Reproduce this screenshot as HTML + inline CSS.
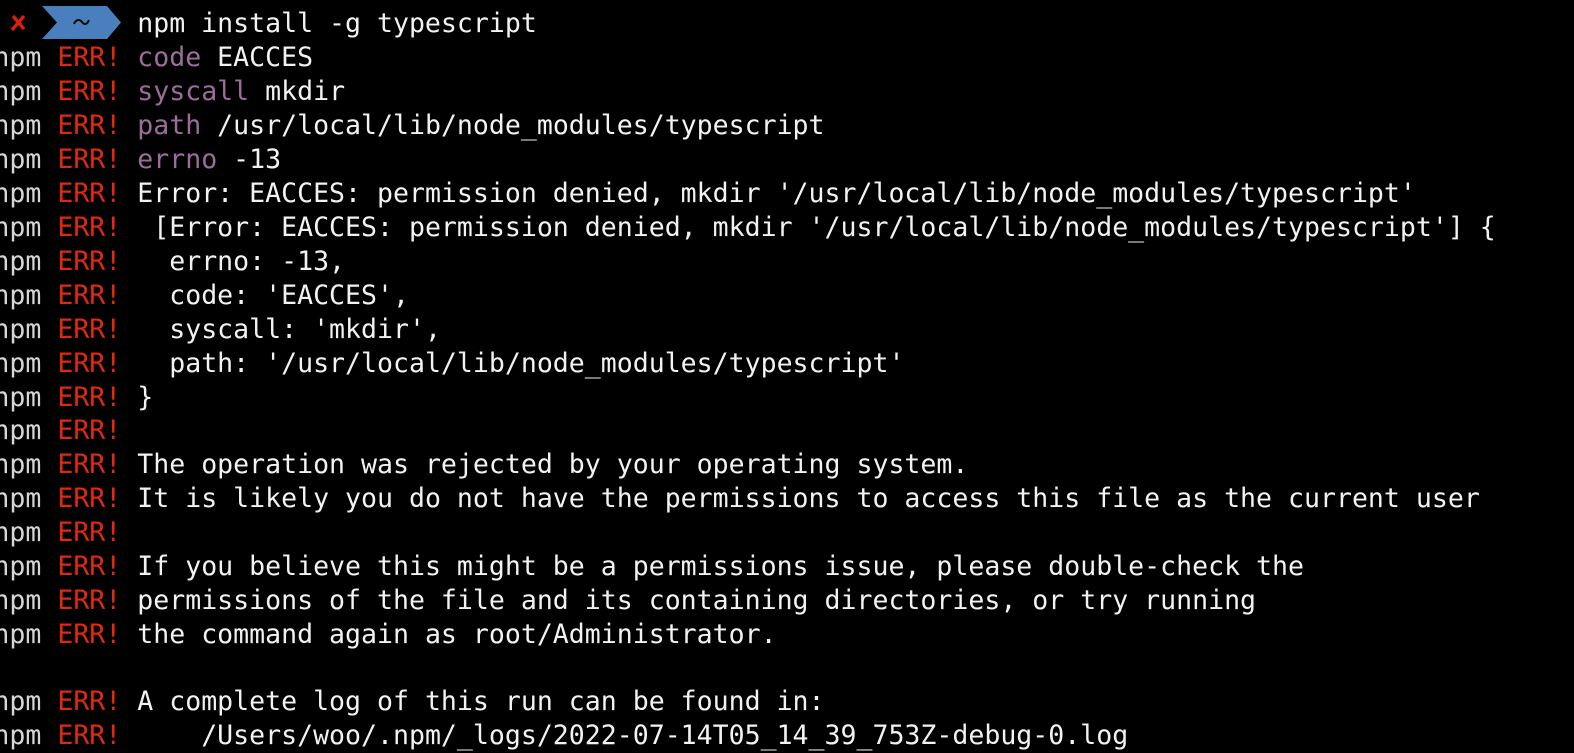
<!DOCTYPE html>
<html><head><meta charset="utf-8"><style>
html,body{margin:0;padding:0;background:#000;width:1574px;height:746px;overflow:hidden}
.l{position:absolute;left:-6.6px;font-family:"DejaVu Sans Mono","Liberation Mono",monospace;font-size:26.55px;line-height:34px;height:34px;white-space:pre;color:#f2f2f2;margin-top:2px}
.n{color:#d6d6d6}.e{color:#e0290f}.p{color:#9c6d9c}
</style></head><body>
<svg style="position:absolute;left:0;top:0" width="130" height="45">
<path d="M13 16 L24 29 M24 16 L12 30" stroke="#d8200c" stroke-width="3.4"/>
<polygon points="42,6 107,6 121,22.5 107,39 42,39 57,22.5" fill="#4a7fbd"/>
<path d="M74 24 C76 19,80 19,82 22 C84 25,87 25,89 20" stroke="#0a0a0a" stroke-width="2" fill="none"/>
</svg>
<div class="l" style="top:5px">         npm install -g typescript</div>
<div class="l" style="top:39px"><span class="n">npm</span> <span class="e">ERR!</span> <span class="p">code</span> EACCES</div>
<div class="l" style="top:73px"><span class="n">npm</span> <span class="e">ERR!</span> <span class="p">syscall</span> mkdir</div>
<div class="l" style="top:107px"><span class="n">npm</span> <span class="e">ERR!</span> <span class="p">path</span> /usr/local/lib/node_modules/typescript</div>
<div class="l" style="top:141px"><span class="n">npm</span> <span class="e">ERR!</span> <span class="p">errno</span> -13</div>
<div class="l" style="top:175px"><span class="n">npm</span> <span class="e">ERR!</span> Error: EACCES: permission denied, mkdir '/usr/local/lib/node_modules/typescript'</div>
<div class="l" style="top:209px"><span class="n">npm</span> <span class="e">ERR!</span>  [Error: EACCES: permission denied, mkdir '/usr/local/lib/node_modules/typescript'] {</div>
<div class="l" style="top:243px"><span class="n">npm</span> <span class="e">ERR!</span>   errno: -13,</div>
<div class="l" style="top:277px"><span class="n">npm</span> <span class="e">ERR!</span>   code: 'EACCES',</div>
<div class="l" style="top:311px"><span class="n">npm</span> <span class="e">ERR!</span>   syscall: 'mkdir',</div>
<div class="l" style="top:345px"><span class="n">npm</span> <span class="e">ERR!</span>   path: '/usr/local/lib/node_modules/typescript'</div>
<div class="l" style="top:379px"><span class="n">npm</span> <span class="e">ERR!</span> }</div>
<div class="l" style="top:412px"><span class="n">npm</span> <span class="e">ERR!</span></div>
<div class="l" style="top:446px"><span class="n">npm</span> <span class="e">ERR!</span> The operation was rejected by your operating system.</div>
<div class="l" style="top:480px"><span class="n">npm</span> <span class="e">ERR!</span> It is likely you do not have the permissions to access this file as the current user</div>
<div class="l" style="top:514px"><span class="n">npm</span> <span class="e">ERR!</span></div>
<div class="l" style="top:548px"><span class="n">npm</span> <span class="e">ERR!</span> If you believe this might be a permissions issue, please double-check the</div>
<div class="l" style="top:582px"><span class="n">npm</span> <span class="e">ERR!</span> permissions of the file and its containing directories, or try running</div>
<div class="l" style="top:616px"><span class="n">npm</span> <span class="e">ERR!</span> the command again as root/Administrator.</div>
<div class="l" style="top:683px"><span class="n">npm</span> <span class="e">ERR!</span> A complete log of this run can be found in:</div>
<div class="l" style="top:717px"><span class="n">npm</span> <span class="e">ERR!</span>     /Users/woo/.npm/_logs/2022-07-14T05_14_39_753Z-debug-0.log</div>
</body></html>
